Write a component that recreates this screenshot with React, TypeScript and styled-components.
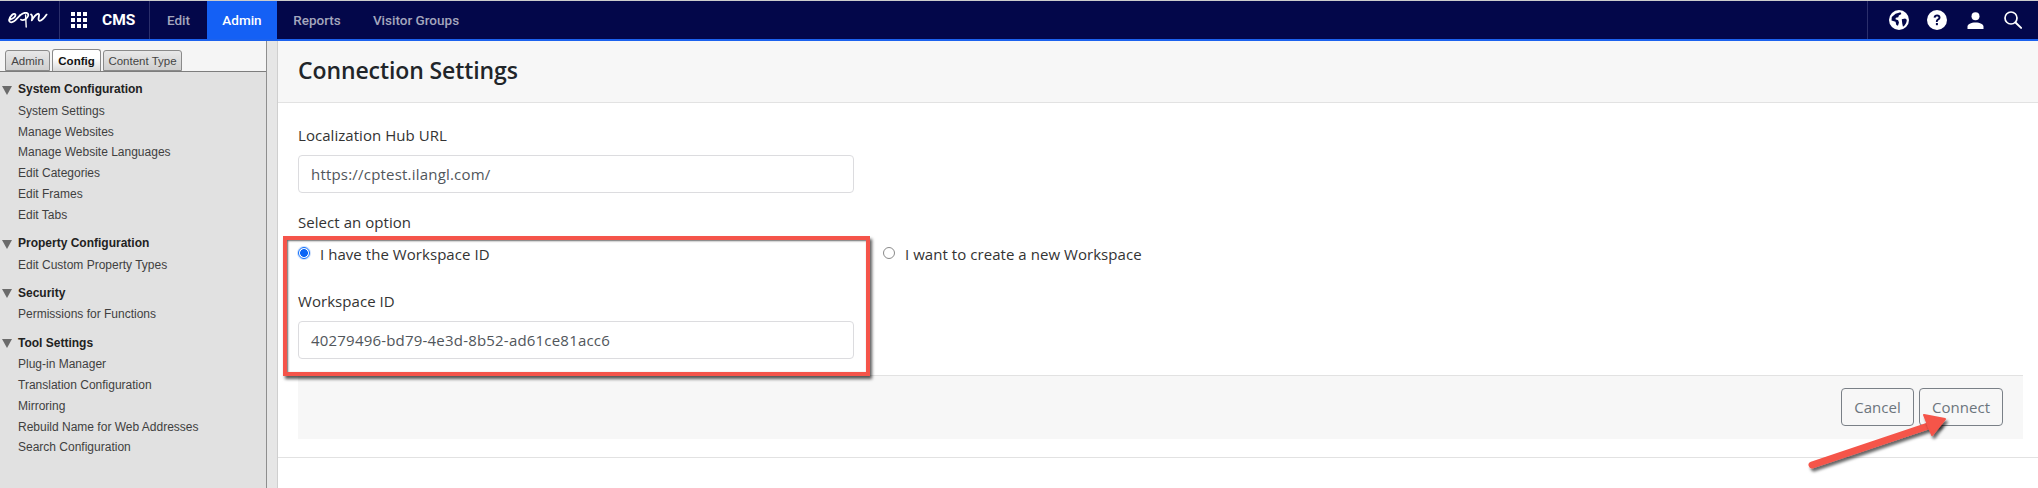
import React from "react";
import styled, { createGlobalStyle } from "styled-components";

const Global = createGlobalStyle`
  html, body { margin: 0; padding: 0; background: #fff; width: 2038px; height: 488px; overflow: hidden; }
  #root { width: 2038px; height: 488px; }
  * { box-sizing: border-box; }
`;
const Page = styled.div`
  position: relative; width: 2038px; height: 488px; display: flex; flex-direction: column;
  padding-top: 1px; background: #ccc; overflow: hidden;
`;
const TopBar = styled.header`
  flex: 0 0 40px; height: 40px; display: flex; align-items: stretch; background: #03074a;
  border-bottom: 2px solid #1c62ee; font-family: Roboto, "Liberation Sans", sans-serif;
  font-size: 13.5px;
`;
const LogoCell = styled.div`
  width: 60px; border-right: 1px solid #2b2f6b; display: flex; align-items: center; justify-content: flex-start; padding-left: 8px;
`;
const AppCell = styled.div`
  width: 90px; border-right: 1px solid #2b2f6b; display: flex; align-items: center; padding-left: 11px; gap: 15px;
  color: #fff; font-weight: 700; font-size: 15.5px;
`;
const NavItem = styled.div<{ $active?: boolean; $w: number }>`
  width: ${(p) => p.$w}px; display: flex; align-items: center; justify-content: center;
  color: ${(p) => (p.$active ? "#fff" : "#a4a6bd")}; font-weight: 500;
  background: ${(p) => (p.$active ? "#1460f5" : "transparent")};
`;
const Spacer = styled.div`flex: 1;`;
const IconBar = styled.div`
  width: 171px; border-left: 1px solid #2b2f6b; display: flex; align-items: center; color: #fff;
  padding-left: 21px;
`;
const IconCell = styled.div<{ $w: number }>`width: ${(p) => p.$w}px; display: flex; align-items: center;`;
const Body = styled.div`flex: 1; display: flex; min-height: 0; background: #fff;`;
const Sidebar = styled.aside`
  width: 267px; background: #e1e1e1; border-right: 1px solid #8e8e8e;
  font-family: "Liberation Sans", Arial, sans-serif; font-size: 12px; color: #3a3a3a;
`;
const TabStrip = styled.div`
  height: 31px; background: #f5f5f5; border-bottom: 1px solid #7d7d7d; padding: 9px 0 0 5px; display: flex; gap: 2px; align-items: flex-end;
`;
const Tab = styled.div<{ $active?: boolean; $w: number }>`
  width: ${(p) => p.$w}px; height: ${(p) => (p.$active ? 22 : 21)}px; border: 1px solid #8a8a8a; border-bottom: ${(p) => (p.$active ? "none" : "1px solid #8a8a8a")};
  border-radius: 3px 3px 0 0; display: flex; align-items: center; justify-content: center; font-size: 11.5px;
  background: ${(p) => (p.$active ? "linear-gradient(#fff 40%, #d8d8d8)" : "linear-gradient(#e8e8e8, #cfcfcf)")};
  color: ${(p) => (p.$active ? "#111" : "#444")}; font-weight: ${(p) => (p.$active ? 700 : 400)};
`;
const Groups = styled.div`padding-top: 5.75px;`;
const Group = styled.section`margin-bottom: 6px;`;
const GroupTitle = styled.div`
  height: 23px; display: flex; align-items: center; gap: 6px; padding-left: 2px; font-weight: 700; color: #222;
`;
const Tri = styled.span`
  width: 0; height: 0; border-left: 5px solid transparent; border-right: 5px solid transparent; border-top: 9px solid #6b6b6b; margin-top: 2px;
`;
const Item = styled.div`height: 20.8px; line-height: 20.8px; padding-left: 18px; color: #3f3f3f;`;
const Splitter = styled.div`width: 11px; background: #e6e6e6; border-right: 1px solid #cfcfcf;`;
const Main = styled.main`
  flex: 1; display: flex; flex-direction: column; font-family: "Open Sans", "Noto Sans", sans-serif; color: #212529;
`;
const TitleBar = styled.div`
  height: 62px; background: #f7f7f7; border-bottom: 1px solid #e2e2e2; padding-left: 20px; display: flex; align-items: center;
`;
const Title = styled.h1`margin: 0 0 3px; font-size: 23px; font-weight: 600; color: #212529; letter-spacing: -0.1px;`;
const Card = styled.div`
  height: 355px; padding: 20px 15px 0 20px; border-bottom: 1px solid #e2e2e2; display: flex; flex-direction: column;
`;
const Label = styled.div`font-size: 15px; line-height: 24px; color: #333; letter-spacing: 0.05px;`;
const Field = styled.div`
  width: 556px; height: 38px; margin-top: 8px; border: 1px solid #dcdcdf; border-radius: 4px; padding: 0 12px;
  display: flex; align-items: center; font-size: 15px; color: #51565b; letter-spacing: 0.2px;
`;
const OptionLabel = styled(Label)`margin-top: 17px;`;
const Options = styled.div`display: flex; align-items: flex-start; margin-top: 8px;`;
const Option = styled.label<{ $w: number }>`
  width: ${(p) => p.$w}px; display: flex; align-items: center; gap: 10px; font-size: 15px; line-height: 24px; color: #333; letter-spacing: 0.05px;
`;
const Radio = styled.span<{ $on?: boolean }>`
  width: 12px; height: 12px; border-radius: 50%; margin-top: -3px;
  border: ${(p) => (p.$on ? "1px solid #0d6efd" : "1px solid #8a8a8a")};
  background: ${(p) => (p.$on ? "radial-gradient(circle, #0b65f5 0 3.6px, #fff 4.2px)" : "#fff")};
  ${(p) => p.$on && "box-shadow: 0 0 0 1px #cfe0fb;"}
`;
const IdLabel = styled(Label)`margin-top: 23px;`;
const Footer = styled.div`
  margin-top: 16px; height: 64px; background: #f7f7f7; border-top: 1px solid #e2e2e2; padding: 12px 20px 0 0;
  display: flex; justify-content: flex-end; gap: 5px; align-items: flex-start;
`;
const Btn = styled.div<{ $w: number }>`
  width: ${(p) => p.$w}px; height: 38px; border: 1px solid #7a8087; border-radius: 4px; color: #6c757d;
  display: flex; align-items: center; justify-content: center; font-size: 15px; letter-spacing: 0.05px;
`;
const Highlight = styled.div`
  position: absolute; left: 283px; top: 236px; width: 587px; height: 140px;
  border: 4px solid #f5544a; box-shadow: 2px 3px 3px rgba(0,0,0,.65), inset 1px 1px 2px rgba(0,0,0,.6);
  pointer-events: none;
`;
const ArrowSvg = styled.svg`position: absolute; left: 1790px; top: 400px; overflow: visible;`;

const groups: [string, string[]][] = [
  ["System Configuration", ["System Settings","Manage Websites","Manage Website Languages","Edit Categories","Edit Frames","Edit Tabs"]],
  ["Property Configuration", ["Edit Custom Property Types"]],
  ["Security", ["Permissions for Functions"]],
  ["Tool Settings", ["Plug-in Manager","Translation Configuration","Mirroring","Rebuild Name for Web Addresses","Search Configuration"]],
];

const Logo = () => (
  <svg width="40" height="16" viewBox="0 0 40 16" fill="none" stroke="#fff" strokeWidth="1.8" strokeLinecap="round" strokeLinejoin="round">
    <path d="M1 8C4 7 7.5 4.8 7.5 3 7.5 1.5 5.5 1.6 4 3 2 5 .6 8 1.6 9.6c1 1.4 3.6.6 5.6-1.2L12 3.4" />
    <path d="M12 3.4c2.4-2 5.6-3.2 7.4-2.2 1.8 1.2.6 4.4-2 6-1.8 1.1-3.4 1.2-4.4.4" />
    <path d="M17.6 3 18.2 15" strokeWidth="1.4" />
    <path d="M23 2.4c1.6.8 1.6 2.6.8 6 1.6-3 3.8-6 6-6.6 1.6-.3 1.4 1.4 1 3-.4 1.8-.6 4 .8 4 2 0 4.4-2.4 7-6.2" />
  </svg>
);
const Apps = () => (
  <svg width="16" height="16" viewBox="0 0 16 16" fill="#fff">
    {[0, 6, 12].flatMap((y) => [0, 6, 12].map((x) => <rect key={`${x}-${y}`} x={x} y={y} width="4" height="4" />))}
  </svg>
);
const Globe = () => (
  <svg width="20" height="20" viewBox="0 0 20 20">
    <circle cx="10" cy="10" r="10" fill="#fff" />
    <path d="M3 6.5 7 3.5l5-1.2.8 1.8-2.7 1.4-.6 1.8-2.5.2-.5 1.5 2.6 1.2.7 2.2-1.2 3.2-1.6-.8-.6-3.2L2.5 10zM12.8 9.5l3.4-.5 1.6 1.2c-.3 3-1.8 5.3-4.3 6.8l-.5-3.3z" fill="#03074a" transform="rotate(-4 10 10)" />
  </svg>
);
const Help = () => (
  <svg width="20" height="20" viewBox="0 0 20 20">
    <circle cx="10" cy="10" r="10" fill="#fff" />
    <path d="M6.6 7.6C6.8 5.7 8.1 4.6 10.1 4.6c2 0 3.4 1.2 3.4 2.9 0 1.3-.7 2-1.8 2.7-.8.5-1 .8-1 1.8H8.9c0-1.5.3-2.2 1.4-2.9.9-.6 1.2-.9 1.2-1.5 0-.7-.6-1.2-1.4-1.2-.9 0-1.4.5-1.5 1.3z" fill="#03074a" />
    <rect x="8.9" y="13" width="2" height="2.2" fill="#03074a" />
  </svg>
);
const User = () => (
  <svg width="17" height="17" viewBox="0 0 17 17" fill="#fff">
    <circle cx="8.5" cy="4.2" r="4" />
    <path d="M0.5 17v-2.6c0-2.2 3.4-4 8-4s8 1.8 8 4V17z" />
  </svg>
);
const Search = () => (
  <svg width="18" height="18" viewBox="0 0 18 18" fill="none" stroke="#fff" strokeWidth="1.7" strokeLinecap="round">
    <circle cx="7" cy="7" r="6" />
    <path d="m11.5 11.5 5.6 5.4" strokeWidth="2" />
  </svg>
);

export default function App() {
  return (
    <Page>
      <Global />
      <TopBar>
        <LogoCell><Logo /></LogoCell>
        <AppCell><Apps /><span>CMS</span></AppCell>
        <NavItem $w={57}>Edit</NavItem>
        <NavItem $w={70} $active>Admin</NavItem>
        <NavItem $w={80}>Reports</NavItem>
        <NavItem $w={118}>Visitor Groups</NavItem>
        <Spacer />
        <IconBar>
          <IconCell $w={38}><Globe /></IconCell>
          <IconCell $w={40}><Help /></IconCell>
          <IconCell $w={37}><User /></IconCell>
          <IconCell $w={18}><Search /></IconCell>
        </IconBar>
      </TopBar>
      <Body>
        <Sidebar>
          <TabStrip>
            <Tab $w={45}>Admin</Tab>
            <Tab $w={49} $active>Config</Tab>
            <Tab $w={79}>Content Type</Tab>
          </TabStrip>
          <Groups>
            {groups.map(([t, items]) => (
              <Group key={t}>
                <GroupTitle><Tri />{t}</GroupTitle>
                {items.map((i) => <Item key={i}>{i}</Item>)}
              </Group>
            ))}
          </Groups>
        </Sidebar>
        <Splitter />
        <Main>
          <TitleBar><Title>Connection Settings</Title></TitleBar>
          <Card>
            <Label>Localization Hub URL</Label>
            <Field>https://cptest.ilangl.com/</Field>
            <OptionLabel>Select an option</OptionLabel>
            <Options>
              <Option $w={585}><Radio $on />I have the Workspace ID</Option>
              <Option $w={400}><Radio />I want to create a new Workspace</Option>
            </Options>
            <IdLabel>Workspace ID</IdLabel>
            <Field>40279496-bd79-4e3d-8b52-ad61ce81acc6</Field>
            <Footer>
              <Btn $w={73}>Cancel</Btn>
              <Btn $w={84}>Connect</Btn>
            </Footer>
          </Card>
        </Main>
      </Body>
      <Highlight />
      <ArrowSvg width="170" height="80" viewBox="0 0 170 80">
        <defs>
          <filter id="sh" x="-20%" y="-40%" width="140%" height="180%">
            <feDropShadow dx="2" dy="3" stdDeviation="1.5" floodColor="#000" floodOpacity="0.6" />
          </filter>
        </defs>
        <path d="M22 65 147 23" stroke="#f5544a" strokeWidth="7" strokeLinecap="round" fill="none" filter="url(#sh)" />
        <path d="M134 15 155 19 142 35z" fill="#f5544a" stroke="#f5544a" strokeWidth="2" strokeLinejoin="round" filter="url(#sh)" />
      </ArrowSvg>
    </Page>
  );
}
